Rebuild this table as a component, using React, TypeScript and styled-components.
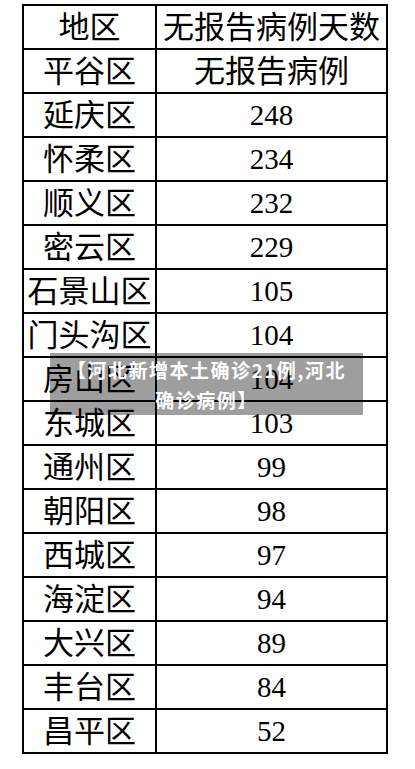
import React from 'react'
import styled, { createGlobalStyle } from 'styled-components';

const GlobalStyle = createGlobalStyle`
  html, body {
    margin: 0;
    padding: 0;
    background: #ffffff;
  }
`;

const Page = styled.div`
  width: 415px;
  height: 769px;
  padding: 4px 0 0 22px;
  box-sizing: border-box;
  background: #ffffff;
  overflow: hidden;
`;

const TableWrap = styled.div`
  position: relative;
  width: 366px;
`;

const Grid = styled.div`
  display: grid;
  grid-template-columns: 131px 229px;
  grid-auto-rows: 42px;
  gap: 2px;
  padding: 2px;
  background: #000000;
`;

const Cell = styled.div<{ $num?: boolean }>`
  background: #ffffff;
  color: #000000;
  display: flex;
  align-items: center;
  justify-content: center;
  white-space: nowrap;
  font-family: "Liberation Serif", "Noto Sans CJK SC", serif;
  font-size: ${p => (p.$num ? '29px' : '31px')};
  line-height: 1;
`;

const Caption = styled.div`
  position: absolute;
  left: 28px;
  top: 349px;
  width: 313px;
  height: 62px;
  box-sizing: border-box;
  padding: 2px 16px 0;
  background: rgba(0, 0, 0, 0.38);
  color: #ffffff;
  font-family: "Noto Sans CJK SC", "Noto Sans", sans-serif;
  font-weight: 700;
  font-size: 19px;
  line-height: 30px;
  letter-spacing: 1.5px;
  text-align: center;
`;

const rows: [string, string][] = [
  ['平谷区', '无报告病例'],
  ['延庆区', '248'],
  ['怀柔区', '234'],
  ['顺义区', '232'],
  ['密云区', '229'],
  ['石景山区', '105'],
  ['门头沟区', '104'],
  ['房山区', '104'],
  ['东城区', '103'],
  ['通州区', '99'],
  ['朝阳区', '98'],
  ['西城区', '97'],
  ['海淀区', '94'],
  ['大兴区', '89'],
  ['丰台区', '84'],
  ['昌平区', '52'],
];

export default function App() {
  return (
    <>
      <GlobalStyle />
      <Page>
        <TableWrap>
          <Grid>
            <Cell>地区</Cell>
            <Cell>无报告病例天数</Cell>
            {rows.map(([district, days]) => (
              <React.Fragment key={district}>
                <Cell>{district}</Cell>
                <Cell $num={/^\d+$/.test(days)}>{days}</Cell>
              </React.Fragment>
            ))}
          </Grid>
          <Caption>【河北新增本土确诊21例,河北确诊病例】</Caption>
        </TableWrap>
      </Page>
    </>
  )
}
